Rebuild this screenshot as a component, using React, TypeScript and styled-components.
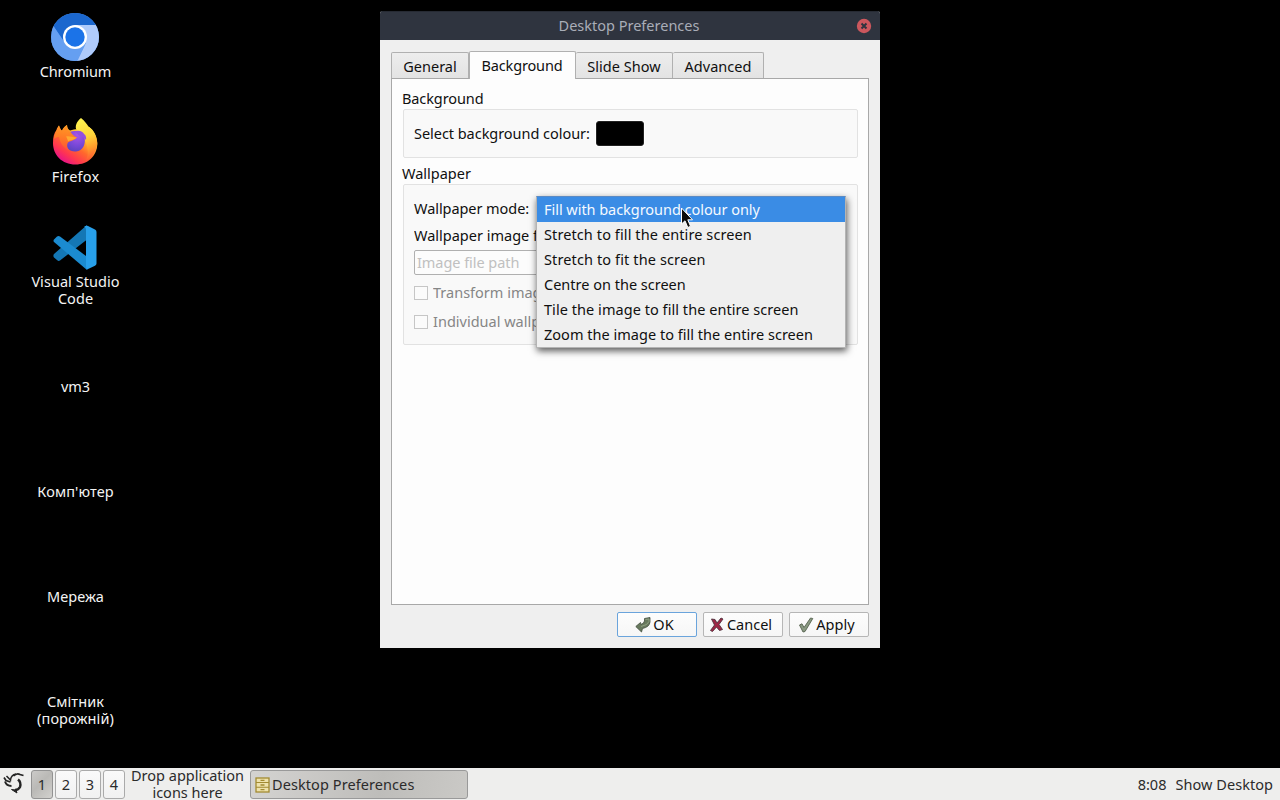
import {ReactNode, useState} from "react";
import styled, {createGlobalStyle} from "styled-components";

const GlobalStyle = createGlobalStyle`
    * {
        box-sizing: border-box;
    }

    body {
        margin: 0;
        background-color: #000;
        font-family: "Noto Sans", "Open Sans", sans-serif;
        font-size: 14.5px;
        line-height: 17px;
        color: #101010;
        overflow: hidden;
    }

    button {
        font: inherit;
        color: inherit;
        margin: 0;
    }
`;

const Screen = styled.div`
    width: 1280px;
    height: 800px;
    display: flex;
    flex-direction: column;
    background-color: #000;
`;

const Desktop = styled.div`
    position: relative;
    flex: 1;
`;

const Label = styled.span<{ $track?: number }>`
    white-space: nowrap;
    letter-spacing: ${props => props.$track ?? 0}px;
`;

const Shortcuts = styled.div`
    width: 151px;
    padding-top: 12px;
    display: grid;
    grid-auto-rows: 105px;
`;

const Shortcut = styled.div`
    display: flex;
    flex-direction: column;
    align-items: center;
    color: #f4f4f4;
    text-align: center;
`;

const ShortcutIcon = styled.div`
    width: 50px;
    height: 51px;
    align-self: flex-start;
    margin-left: 50px;

    svg {
        display: block;
    }
`;

const Window = styled.div`
    position: absolute;
    left: 380px;
    top: 11px;
    width: 500px;
    height: 637px;
    display: flex;
    flex-direction: column;
    background-color: #efefef;
    border-radius: 3px 3px 0 0;
    overflow: hidden;
`;

const TitleBar = styled.div`
    height: 29px;
    flex: none;
    display: grid;
    grid-template-columns: 22px 1fr 24px;
    align-items: center;
    padding-bottom: 1px;
    background-color: #2f343f;
    color: #a9adb8;
    text-align: center;
    border-top: 1px solid #262a33;
`;

const CloseButton = styled.button`
    width: 16px;
    height: 16px;
    padding: 0;
    border: 0;
    background: none;

    svg {
        display: block;
    }
`;

const Body = styled.div`
    flex: 1;
    display: flex;
    flex-direction: column;
    padding: 11px 11px 11px;
`;

const Tabs = styled.div`
    display: flex;
    align-items: flex-end;
    height: 27px;
`;

const Tab = styled.button<{ $active: boolean; $width: number }>`
    width: ${props => props.$width}px;
    height: ${props => props.$active ? 28 : 26}px;
    margin-bottom: ${props => props.$active ? -1 : 0}px;
    padding: ${props => props.$active ? "0 1px 1px 0" : "2px 0 0"};
    border: 1px solid #b0b0b0;
    border-bottom: 0;
    border-left-width: ${props => props.$active ? 1 : 0}px;
    border-radius: 2px 2px 0 0;
    background: ${props => props.$active ? "#fdfdfd" : "linear-gradient(#ededed, #e3e3e3)"};
    position: relative;
    z-index: ${props => props.$active ? 1 : 0};

    &:first-child {
        border-left-width: 1px;
    }
`;

const Pane = styled.div`
    flex: 1;
    border: 1px solid #a8a8a8;
    background-color: #fdfdfd;
    padding: 11px 10px;
`;

const GroupTitle = styled.div`
    height: 19px;
`;

const Group = styled.div<{ $height: number }>`
    height: ${props => props.$height}px;
    margin: 0 0 7px 1px;
    padding: 11px 11px 11px 10px;
    border: 1px solid #e2e2e2;
    border-radius: 2px;
    background-color: #f9f9f9;
`;

const ColourRow = styled.div`
    display: flex;
    align-items: center;
    gap: 6px;
    height: 25px;
`;

const Swatch = styled.button`
    width: 48px;
    height: 25px;
    border: 1px solid #222;
    border-radius: 3px;
    background-color: #000;
    box-shadow: 0 0 0 1px #fff;
`;

const ModeRow = styled.div`
    display: flex;
    align-items: center;
    height: 25px;
    gap: 6px;
`;

const Menu = styled.ul`
    position: absolute;
    left: 536px;
    top: 196px;
    width: 310px;
    margin: 0;
    padding: 0;
    list-style: none;
    background-color: #efefef;
    border: 1px solid #b4b4b4;
    border-top-color: #5a8ac4;
    box-shadow: 1px 3px 7px rgba(0, 0, 0, 0.65);
    z-index: 2;
`;

const MenuItem = styled.li<{ $selected: boolean }>`
    height: 25px;
    padding: 4px 7px;
    background-color: ${props => props.$selected ? "#3a8ce5" : "transparent"};
    color: ${props => props.$selected ? "#f4f9ff" : "inherit"};
`;

const ImageLabel = styled.div`
    height: 29px;
    padding-top: 6px;
`;

// extra padding keeps the descenders inside the clip box
const ClippedLabel = styled(Label)<{ $width: number }>`
    display: block;
    width: ${props => props.$width}px;
    padding: 3px 0;
    margin: -3px 0;
    overflow: hidden;
`;

const PathInput = styled.input`
    display: block;
    width: 100%;
    height: 25px;
    padding: 0 2px 1px;
    border: 1px solid #b0b0b0;
    border-radius: 2px;
    background-color: #fcfcfc;
    font: inherit;

    &::placeholder {
        color: #c0c0c0;
        opacity: 1;
        letter-spacing: -0.05px;
    }
`;

const CheckRow = styled.label`
    display: flex;
    align-items: center;
    height: 29px;
    gap: 5px;
    color: #868686;
`;

const CheckBox = styled.span`
    width: 14px;
    height: 14px;
    flex: none;
    border: 1px solid #c6c6c6;
    background-color: #fbfbfb;
`;

const Checks = styled.div`
    padding-top: 3px;
`;

const Actions = styled.div`
    display: flex;
    justify-content: flex-end;
    gap: 6px;
    padding-top: 7px;
`;

const ActionButton = styled.button<{ $primary?: boolean }>`
    width: 80px;
    height: 25px;
    display: flex;
    align-items: center;
    justify-content: center;
    gap: 2px;
    padding: 0 5px 0 0;
    border: 1px solid ${props => props.$primary ? "#6aa4dc" : "#b6b6b6"};
    border-radius: 2px;
    background: linear-gradient(#fdfdfd, #f6f6f6);
`;

const Pointer = styled.svg`
    position: absolute;
    left: 680px;
    top: 207px;
    z-index: 3;
`;

const Panel = styled.div`
    height: 32px;
    display: flex;
    align-items: center;
    background-color: #eeeeed;
    color: #2b2b2b;
`;

const MenuButton = styled.div`
    width: 31px;
    height: 32px;
    padding: 4px 0 0 3px;
`;

const Pager = styled.div`
    display: flex;
    gap: 2px;
`;

const PagerButton = styled.button<{ $active: boolean }>`
    width: 22px;
    height: 29px;
    padding: 0;
    border: 1px solid ${props => props.$active ? "#929292" : "#aaa"};
    border-radius: 3px;
    background: ${props => props.$active ? "linear-gradient(135deg, #cbcac8, #bab9b6 45%, #d2d1ce)" : "linear-gradient(#fafafa, #f1f1f1)"};
`;

const QuickLaunch = styled.div`
    width: 125px;
    display: flex;
    flex-direction: column;
    align-items: center;
`;

const Task = styled.button`
    width: 218px;
    height: 29px;
    display: flex;
    align-items: center;
    gap: 2px;
    padding: 1px 4px 0;
    border: 1px solid #999;
    border-radius: 3px;
    background: linear-gradient(100deg, #d4d3d1, #bebdba 60%, #cac9c6);
`;

const Tray = styled.div`
    margin-left: auto;
    display: flex;
    gap: 9px;
    padding: 1px 7px 0 0;
`;

const ChromiumIcon = () => (
  <svg width="50" height="51" viewBox="0 0 50 51">
    <defs>
      <clipPath id="disc"><circle cx="25" cy="25" r="24" /></clipPath>
    </defs>
    <g clipPath="url(#disc)">
      <rect width="50" height="50" fill="#5e9cf0" />
      <path d="M2 12V0H49V13H25L14.500 30Z" fill="#1b67ce" />
      <path d="M25 13H50V50H26L36 31Z" fill="#afcbfb" />
      <path d="M2 12L14.500 31L25 37L35 33L27 50H0Z" fill="#659ff1" />
    </g>
    <circle cx="25" cy="25" r="12" fill="#fff" />
    <circle cx="25" cy="25" r="9.700" fill="#1b73e8" />
  </svg>
);

const FirefoxIcon = () => (
  <svg width="50" height="51" viewBox="0 0 50 51">
    <defs>
      <linearGradient id="fire" x1="0.85" y1="0.1" x2="0.2" y2="0.9">
        <stop offset="0.05" stopColor="#fff14d" />
        <stop offset="0.3" stopColor="#ffb52d" />
        <stop offset="0.55" stopColor="#ff682c" />
        <stop offset="0.8" stopColor="#ff3650" />
        <stop offset="1" stopColor="#e91586" />
      </linearGradient>
      <radialGradient id="globe" cx="0.6" cy="0.2" r="0.85">
        <stop offset="0" stopColor="#a956e6" />
        <stop offset="0.55" stopColor="#7c49da" />
        <stop offset="1" stopColor="#5942bf" />
      </radialGradient>
      <linearGradient id="tail" x1="0.4" y1="0" x2="0.6" y2="1">
        <stop offset="0" stopColor="#fff44f" />
        <stop offset="0.45" stopColor="#ffd43a" />
        <stop offset="0.75" stopColor="#ff9a2b" />
        <stop offset="1" stopColor="#ff5a36" />
      </linearGradient>
      <linearGradient id="face" x1="0.5" y1="0" x2="0.4" y2="1">
        <stop offset="0" stopColor="#ff9a24" />
        <stop offset="0.5" stopColor="#ff7a26" />
        <stop offset="1" stopColor="#ff5038" />
      </linearGradient>
    </defs>
    <path d="M9 8.500C9.500 11 10.500 12.500 12 13.500C13 11 15 9 17 8C17 10.500 18 12.500 20 13.500C25 12 29 12 31 13L39 10C44 14 47 20 47.300 27C47 39 38 47.500 25.500 47.500C12 47.500 3 38 3 26C3 20 4 16 6.500 13C7 11 8 9.500 9 8.500Z" fill="url(#fire)" />
    <path d="M31 1C35 4 36.500 7 38.500 9.500C44 13 47 19 47.300 26C47 33 43 40 36 43C40 36 37 27 34 22C35 18 32.500 15 27 13.500C24 10 27 4 31 1Z" fill="url(#tail)" />
    <path d="M17.500 17C20 14 24 13.500 28 14.500C31 14.500 34 16 34.500 20C36 27 33 34 26 34.500C20 35 15 31 16 25Z" fill="url(#globe)" />
    <path d="M24 14.500C29 12.500 33 14.500 34 17C36 18 36.500 21 36 23C34 20 31 20 28 17.500C27 16 26 15 24 14.500Z" fill="#9450df" />
    <path d="M9 8.500C10 12 12 14 12 14C13.500 11 15 9 17 8C17 12 19 14 21 15.500C22 17.500 25 20 27 20.500C25 23 20 24 18 25.500C16 29 18 32 20 34C12 31 10 24 9 20C7 20 6 20.500 4 22C4.500 17 7 12 9 8.500Z" fill="url(#face)" />
    <path d="M16 19.500C19 18.500 22 20 27 20.500C24 23 20 23 18 24.500C17.500 22 17 21 16 19.500Z" fill="#ffa930" />
  </svg>
);

const CodeIcon = () => (
  <svg width="50" height="51" viewBox="0 0 50 51">
    <path d="M4 32L37 3L39 16L10 38.500Q8.500 39.500 7 38L4 35.500Q2.800 33.500 4 32Z" fill="#1477b5" />
    <path d="M4 17.500L7 14.500Q8.500 13.500 10 14.500L40 37L37 48L4 20Q3 18.700 4 17.500Z" fill="#1b8bd0" />
    <path d="M34 5Q36 3 38 4L45 7.500Q46.500 8.200 46.500 10V41.500Q46.500 43 45 43.700L37 47.500Q36 47 36 44V8Q36 5 34 5Z" fill="#28a0ea" />
  </svg>
);

const OkIcon = () => (
  <svg width="16" height="16" viewBox="0 0 16 16">
    <path d="M9.500 1.500L15 .5V5Q14.500 10 7.500 11.500L6.500 15L.8 9.500L5.500 5.500L6 7.500Q9 6.500 9.500 4Z" fill="#687a5e" stroke="#414c3e" strokeWidth="0.8" />
    <path d="M10.500 2.500L14 2V4.500Q13 8 6 9.500" fill="none" stroke="#91a184" strokeWidth="1" />
  </svg>
);

const CancelIcon = () => (
  <svg width="16" height="16" viewBox="0 0 16 16">
    <path d="M2.500 2L6 2.500L8 6L12 1L14 2L10 7.500L13.500 12.500L10.500 13.500L7.500 10L3.500 14.500L1.500 13.500L5.500 8Z" fill="#9e2746" stroke="#50343e" strokeWidth="0.9" />
  </svg>
);

const ApplyIcon = () => (
  <svg width="16" height="16" viewBox="0 0 16 16">
    <path d="M1.500 8L4 6.800L6 10.500L12.500 1L14.800 1.500L7 14.500L5 15Z" fill="#8a9a82" stroke="#56624f" strokeWidth="0.9" />
  </svg>
);

const BirdIcon = () => (
  <svg width="22" height="24" viewBox="0 0 22 24" fill="none" stroke="#242424">
    <path d="M1 5.500L3 8.500L7.500 10" strokeWidth="1.700" />
    <path d="M2 9.500Q3.500 14 8.500 14" strokeWidth="2" />
    <path d="M3.500 4L7.500 8Q8 3 13 2" strokeWidth="1.500" />
    <path d="M10.500 4Q14 .5 17 2.500L20.500 3.500" strokeWidth="1.700" />
    <path d="M15 7.500Q18.500 10.500 17 15Q15.500 18 12 18" strokeWidth="2.400" />
    <path d="M8.500 17.500L13 18L14 21Z" fill="#242424" strokeWidth="1" />
  </svg>
);

const CabinetIcon = () => (
  <svg width="15" height="16" viewBox="0 0 15 16" fill="none" stroke="#a38b32">
    <rect x="1" y="1" width="13" height="14" fill="#eee2ac" strokeWidth="1.300" />
    <path d="M1 5.500H14M1 10.300H14" strokeWidth="1.100" />
    <path d="M5.500 3.300H9.500M5.500 8H9.500M5.500 12.700H9.500" strokeWidth="1.300" />
  </svg>
);

interface IShortcut {
  lines: string[];
  track: number;
  icon?: ReactNode;
}

const shortcuts: IShortcut[] = [
  { lines: ["Chromium"], track: -0.1, icon: <ChromiumIcon /> },
  { lines: ["Firefox"], track: 0.2, icon: <FirefoxIcon /> },
  { lines: ["Visual Studio", "Code"], track: 0.05, icon: <CodeIcon /> },
  { lines: ["vm3"], track: -0.1 },
  { lines: ["Комп'ютер"], track: 0.1 },
  { lines: ["Мережа"], track: 0.1 },
  { lines: ["Смітник", "(порожній)"], track: 0.1 }
];

const tabs = [
  { name: "General", width: 78, track: 0 },
  { name: "Background", width: 107, track: -0.15 },
  { name: "Slide Show", width: 97, track: 0.05 },
  { name: "Advanced", width: 91, track: 0.05 }
];

const modes = [
  { name: "Fill with background colour only", track: -0.04 },
  { name: "Stretch to fill the entire screen", track: 0.1 },
  { name: "Stretch to fit the screen", track: 0.12 },
  { name: "Centre on the screen", track: 0 },
  { name: "Tile the image to fill the entire screen", track: 0.05 },
  { name: "Zoom the image to fill the entire screen", track: 0.02 }
];

export default function App() {
  const [tab, setTab] = useState("Background");
  const [mode, setMode] = useState(0);
  const [workspace, setWorkspace] = useState(1);

  return (
    <Screen>
      <GlobalStyle />
      <Desktop>
        <Shortcuts>
          {shortcuts.map(({ lines, track, icon }) => (
            <Shortcut key={lines[0]}>
              <ShortcutIcon>{icon}</ShortcutIcon>
              {lines.map(line => <Label key={line} $track={track}>{line}</Label>)}
            </Shortcut>
          ))}
        </Shortcuts>

        <Window>
          <TitleBar>
            <span />
            <Label $track={0}>Desktop Preferences</Label>
            <CloseButton aria-label="Close">
              <svg width="16" height="16" viewBox="0 0 16 16">
                <circle cx="8" cy="8" r="7.200" fill="#cc575d" />
                <path d="M5.500 5.500L10.500 10.500M10.500 5.500L5.500 10.500" stroke="#2f343f" strokeWidth="2" />
              </svg>
            </CloseButton>
          </TitleBar>
          <Body>
            <Tabs>
              {tabs.map(({ name, width, track }) => (
                <Tab key={name} $active={tab === name} $width={width} onClick={() => setTab(name)}>
                  <Label $track={track}>{name}</Label>
                </Tab>
              ))}
            </Tabs>
            <Pane>
              <GroupTitle><Label $track={-0.1}>Background</Label></GroupTitle>
              <Group $height={49}>
                <ColourRow>
                  <Label $track={-0.04}>Select background colour:</Label>
                  <Swatch aria-label="Background colour" />
                </ColourRow>
              </Group>
              <GroupTitle><Label>Wallpaper</Label></GroupTitle>
              <Group $height={161}>
                <ModeRow><Label $track={-0.06}>Wallpaper mode:</Label></ModeRow>
                <ImageLabel><ClippedLabel $width={122}>Wallpaper image file:</ClippedLabel></ImageLabel>
                <PathInput placeholder="Image file path" disabled />
                <Checks>
                  <CheckRow><CheckBox /><ClippedLabel $width={103}>Transform image</ClippedLabel></CheckRow>
                  <CheckRow><CheckBox /><ClippedLabel $width={103}>Individual wallpapers</ClippedLabel></CheckRow>
                </Checks>
              </Group>
            </Pane>
            <Actions>
              <ActionButton $primary><OkIcon /><Label $track={0.2}>OK</Label></ActionButton>
              <ActionButton><CancelIcon /><Label>Cancel</Label></ActionButton>
              <ActionButton><ApplyIcon /><Label $track={0.1}>Apply</Label></ActionButton>
            </Actions>
          </Body>
        </Window>

        <Menu>
          {modes.map(({ name, track }, i) => (
            <MenuItem key={name} $selected={i === mode} onClick={() => setMode(i)}>
              <Label $track={track}>{name}</Label>
            </MenuItem>
          ))}
        </Menu>
        <Pointer width="14" height="22" viewBox="0 0 14 22">
          <path d="M1.500 1V17L5 13.800L7.800 20.500L10.500 19.300L7.800 12.800H12.500Z" fill="#0a0a0a" stroke="#fff" strokeWidth="1" />
        </Pointer>
      </Desktop>

      <Panel>
        <MenuButton><BirdIcon /></MenuButton>
        <Pager>
          {[1, 2, 3, 4].map(n => (
            <PagerButton key={n} $active={n === workspace} onClick={() => setWorkspace(n)}>{n}</PagerButton>
          ))}
        </Pager>
        <QuickLaunch>
          <Label>Drop application</Label>
          <Label>icons here</Label>
        </QuickLaunch>
        <Task><CabinetIcon /><Label $track={0.08}>Desktop Preferences</Label></Task>
        <Tray>
          <Label>8:08</Label>
          <Label $track={0.05}>Show Desktop</Label>
        </Tray>
      </Panel>
    </Screen>
  );
}
